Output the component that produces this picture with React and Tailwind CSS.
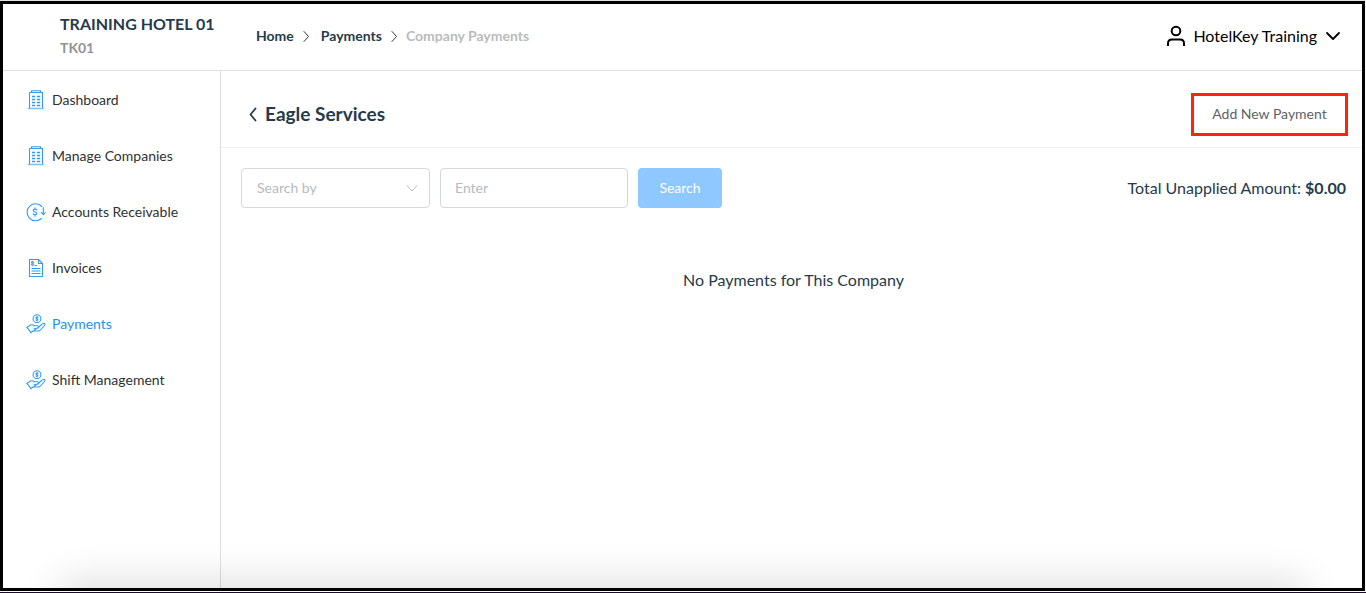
import React from "react";

function Chevron({ d, className, width = 1.2 }) {
  return (
    <svg viewBox="0 0 16 16" className={className} fill="none" stroke="currentColor" strokeWidth={width} strokeLinecap="round" strokeLinejoin="round" aria-hidden="true">
      <path d={d} />
    </svg>
  );
}

const RIGHT = "M6 3.5 10.5 8.5 6 13.5";
const LEFT = "M10.5 2.500 5.500 8.500l5 6";
const DOWN = "M2 5l6 6 6-6";

function IconFrame({ children }) {
  return (
    <svg viewBox="0 0 20 20" className="size-5 shrink-0" fill="none" stroke="#2f9bf5" strokeWidth="1.1" strokeLinecap="round" strokeLinejoin="round" aria-hidden="true">
      {children}
    </svg>
  );
}

function BuildingIcon() {
  return (
    <IconFrame>
      <path d="M3.500 18.500V2.500h13v16M5.500 2.500V.8h9v1.700" />
      <path d="M2.500 18.500h15" stroke="#7cc0f9" strokeWidth="1.500" />
      <path d="M6 6.500h3.200M11 6.500h3.200M6 9.500h3.200M11 9.500h3.200M6 12.500h3.200M11 12.500h3.200M6 15.500h3.200M11 15.500h3.200" strokeWidth="1.300" strokeLinecap="butt" />
    </IconFrame>
  );
}

function Dollar({ x, y, s }) {
  return (
    <g transform={`translate(${x} ${y}) scale(${s})`}>
      <path d="M2 -2.200C1.600 -3 .8 -3.200 0 -3.200c-1.200 0-2 .6-2 1.600C-2 .2 2-.2 2 1.600c0 1-.8 1.600-2 1.600-1 0-1.800-.4-2.100-1.200M0-4.600v1.400M0 3.200v1.400" strokeWidth={1.1 / s} />
    </g>
  );
}

function ReceivableIcon() {
  return (
    <IconFrame>
      <path d="M15.800 4.500A8.500 8.500 0 1 0 15.400 16.500" />
      <path d="M17.300 5.500v7M15.300 10.500l2 2.200 2-2.200" />
      <Dollar x={9} y={10} s={0.9} />
    </IconFrame>
  );
}

function InvoiceIcon() {
  return (
    <IconFrame>
      <path d="M3.500 1.500h9l4 4v13h-13zM12.500 1.500v4h4" />
      <path d="M8.500 7.500h2.500M5.500 10.500h9M5.500 13h9M5.500 15.500h9" strokeWidth="1.200" strokeLinecap="butt" />
      <Dollar x={6.5} y={5.500} s={0.5} />
    </IconFrame>
  );
}

function HandIcon() {
  return (
    <IconFrame>
      <circle cx="11" cy="4.700" r="3.900" />
      <Dollar x={11} y={4.7} s={0.5} />
      <path d="M1 13.400 4 11.300c2-1 3.500-.4 4.600.5h2.800c1.700 0 1.700 2.400.1 2.500l-3.300.2M12.800 13l4-3.400c1.500-1 2.800.6 1.700 1.900l-4 4.500c-.6.7-1.300 1-2.200 1H7l-2 1.600z" />
      <path d="M1 13.400 5 18.600" />
    </IconFrame>
  );
}

const NAV = [
  { label: "Dashboard", Icon: BuildingIcon },
  { label: "Manage Companies", Icon: BuildingIcon },
  { label: "Accounts Receivable", Icon: ReceivableIcon },
  { label: "Invoices", Icon: InvoiceIcon },
  { label: "Payments", Icon: HandIcon, active: true },
  { label: "Shift Management", Icon: HandIcon },
];

function Header() {
  return (
    <header className="flex h-[67px] items-center border-b border-[#dfdfdf] pr-[21px] pb-[2px] pl-[57px]">
      <div className="w-49 shrink-0 font-bold whitespace-nowrap">
        <div className="text-base leading-6 text-[#263a4b]">TRAINING HOTEL 01</div>
        <div className="text-sm leading-6 text-[#939393]">TK01</div>
      </div>
      <nav aria-label="Breadcrumb" className="flex items-center text-sm font-bold whitespace-nowrap text-[#263a4b]">
        <a href="#home">Home</a>
        <Chevron d={RIGHT} className="mr-[7px] ml-1 size-4" width={1} />
        <a href="#payments">Payments</a>
        <Chevron d={RIGHT} className="mx-1 size-4" width={1} />
        <span aria-current="page" className="text-[#b9bbbd]">Company Payments</span>
      </nav>
      <button type="button" className="ml-auto flex items-center text-base whitespace-nowrap text-black">
        <svg viewBox="0 0 20 22" className="mr-[7px] h-[22px] w-5" fill="none" stroke="currentColor" strokeWidth="2" aria-hidden="true">
          <circle cx="10" cy="6" r="4.300" />
          <path d="M2 21v-2.500c0-2.600 1.500-4 4-4h8c2.500 0 4 1.400 4 4V21" />
        </svg>
        HotelKey Training
        <Chevron d={DOWN} className="ml-2 size-4" width={1.8} />
      </button>
    </header>
  );
}

export default function App() {
  return (
    <div className="flex min-h-screen flex-col border-t border-b border-t-[#dfe5e3] border-b-[#1b0b2b] bg-white pr-px pb-px font-['Lato',sans-serif]">
      <div className="relative flex grow flex-col overflow-hidden border-3 border-black">
        <Header />
        <div className="flex grow">
          <nav aria-label="Main" className="w-[218px] shrink-0 border-r border-[#dfdfdf] pt-px">
            {NAV.map(({ label, Icon, active }) => (
              <a
                key={label}
                href="#section"
                aria-current={active ? "page" : undefined}
                className={`mb-4 flex h-10 items-center gap-[6px] pl-[23px] text-sm first:mt-2 ${active ? "text-[#1e90f5]" : "text-[#303133]"}`}
              >
                <Icon />
                {label}
              </a>
            ))}
          </nav>
          <main className="min-w-0 grow">
            <div className="flex h-[77px] items-center justify-between border-b border-[#eeeeee] pt-[10px] pr-[14px] pl-6">
              <div className="flex items-center gap-1 text-[#263a4b]">
                <button type="button" aria-label="Back">
                  <Chevron d={LEFT} className="size-4" width={1.8} />
                </button>
                <h1 className="text-[19px] leading-6 font-bold">Eagle Services</h1>
              </div>
              <button type="button" className="h-[43px] w-[157px] border-3 border-[#f9250f] text-sm text-[#606266]">Add New Payment</button>
            </div>
            <form className="flex items-center gap-[10px] pt-5 pr-4 pl-5" onSubmit={(e) => e.preventDefault()}>
              <div className="relative">
                <select aria-label="Search by" defaultValue="" className="block h-10 w-[189px] appearance-none rounded border border-[#d3d7e0] bg-white px-[15px] text-sm text-[#b6bac2]">
                  <option value="">Search by</option>
                </select>
                <Chevron d="M3 5.500l5 5.500 5-5.500" className="pointer-events-none absolute top-3 right-[10px] size-4 text-[#b6bac2]" width={1} />
              </div>
              <input aria-label="Search value" placeholder="Enter" className="h-10 w-[188px] rounded border border-[#d3d7e0] px-[14px] pb-[2px] text-sm placeholder:text-[#b6bac2]" />
              <button type="submit" className="h-10 w-21 rounded bg-[#8ec8fe] text-sm text-white">Search</button>
              <p className="ml-auto text-base whitespace-nowrap text-[#263a4b]">
                Total Unapplied Amount: <strong>$0.00</strong>
              </p>
            </form>
            <p className="pt-[60px] pl-1 text-center text-base text-[#263a4b]">No Payments for This Company</p>
          </main>
        </div>
        <div className="pointer-events-none absolute inset-x-16 -bottom-5 h-4 shadow-[0_0_40px_8px_rgba(0,0,0,0.16)]" />
      </div>
    </div>
  );
}
